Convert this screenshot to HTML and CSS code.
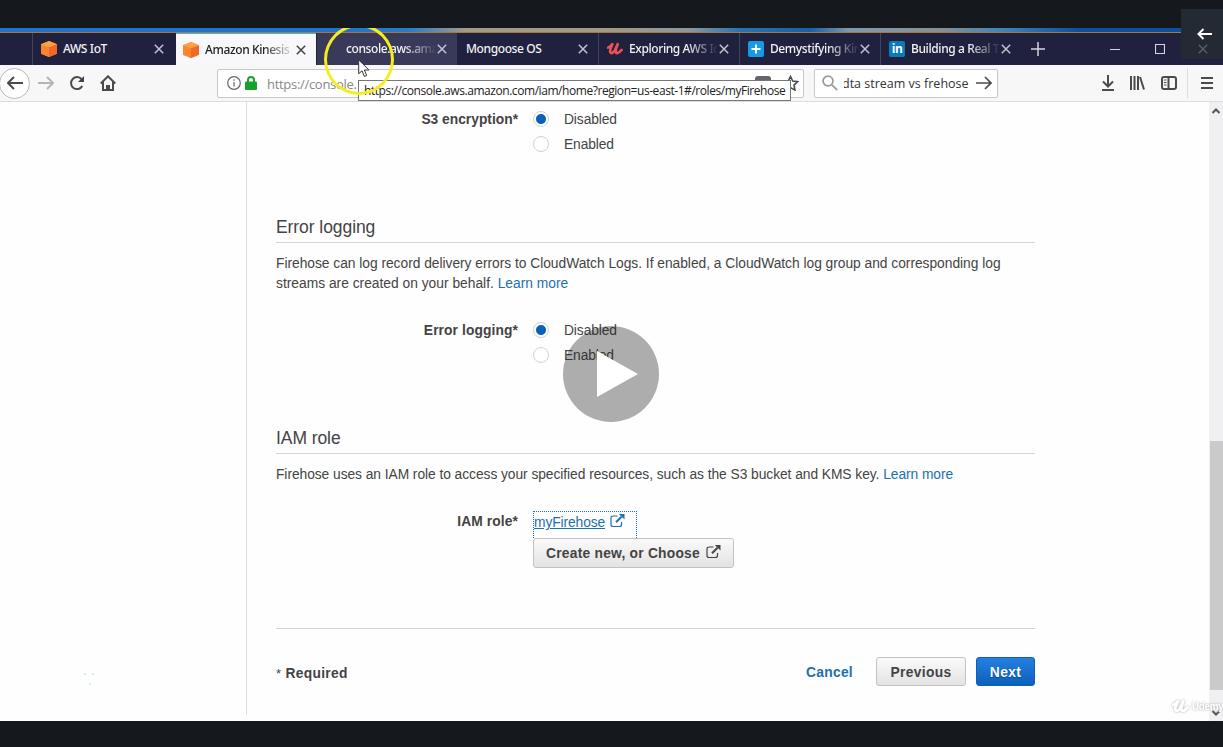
FILE: index.html
```html
<!DOCTYPE html>
<html lang="en">
<head>
<meta charset="utf-8">
<title>Amazon Kinesis Firehose</title>
<link rel="stylesheet" href="styles.css">
</head>
<body>
<svg class="defs" width="0" height="0">
  <symbol id="cube" viewBox="0 0 16 16"><path d="M8 0l8 3.2v9.6L8 16l-8-3.200V3.200z" fill="#fb8c32"/><path d="M0 3.200l8 3.100V16l-8-3.200z" fill="#fb8530"/><path d="M16 3.200L8 6.300V16l8-3.200z" fill="#ee682a"/><path d="M8 0l8 3.200-8 3.100-8-3.100z" fill="#ff9f40"/></symbol>
  <symbol id="close" viewBox="0 0 10 10"><path d="M.8.8l8.400 8.400M9.200.8L.8 9.200" fill="none" stroke="currentColor" stroke-width="1.500"/></symbol>
  <symbol id="external" viewBox="0 0 15 14"><path d="M7.500 2H3.200Q1 2 1 4v6.500Q1 12.500 3.200 12.500h6.300q2 0 2-2V8" fill="none" stroke="currentColor" stroke-width="1.200"/><path d="M6 8.300l5.500-5.500" stroke="currentColor" stroke-width="2"/><path d="M8.800 0H14.500v5.600z" fill="currentColor"/></symbol>
  <symbol id="u" viewBox="0 0 15 13"><path d="M1 5.200Q4 4 5 2 2.400 7.500 3 9.500q1.200 2.200 4.300-1.500L10 2Q7.600 7.800 8.300 9.700q1.500 2 5.400-2.300" fill="none" stroke="currentColor" stroke-width="2.500" stroke-linecap="round" stroke-linejoin="round"/></symbol>
</svg>
<div class="screen">
  <div class="desktop"></div>
  <div class="tabs">
    <div class="tab-gap"></div>
    <div class="tab"><svg class="fav"><use href="#cube"/></svg><span class="title">AWS IoT</span><svg class="x"><use href="#close"/></svg></div>
    <div class="tab active"><svg class="fav"><use href="#cube"/></svg><span class="title fade">Amazon Kinesis</span><svg class="x"><use href="#close"/></svg></div>
    <div class="tab hover"><span class="title fade">console.aws.ama</span><svg class="x"><use href="#close"/></svg></div>
    <div class="tab plain"><span class="title">Mongoose OS</span><svg class="x"><use href="#close"/></svg></div>
    <div class="tab"><svg class="fav udemy"><use href="#u"/></svg><span class="title fade">Exploring AWS Io</span><svg class="x"><use href="#close"/></svg></div>
    <div class="tab"><svg class="fav" viewBox="0 0 16 16"><rect width="16" height="16" rx="2" fill="#159ae5"/><path d="M8 3.500v9M3.500 8h9" stroke="#fff" stroke-width="2"/></svg><span class="title fade">Demystifying Kin</span><svg class="x"><use href="#close"/></svg></div>
    <div class="tab"><span class="fav linkedin">in</span><span class="title fade">Building a Real T</span><svg class="x"><use href="#close"/></svg></div>
    <div class="window-tools">
      <svg width="14" height="14" viewBox="0 0 14 14"><path d="M7 0v14M0 7h14"/></svg>
      <svg class="min" width="10" height="10" viewBox="0 0 10 10"><path d="M0 5.500h10"/></svg>
      <svg class="max" width="10" height="10" viewBox="0 0 10 10"><path d="M.5.5h9v9h-9z"/></svg>
    </div>
  </div>
  <div class="toolbar">
    <span class="back"><svg width="16" height="14" viewBox="0 0 16 14"><path d="M16 7H1M7 1L1 7l6 6"/></svg></span>
    <svg class="forward" width="16" height="14" viewBox="0 0 16 14"><path d="M0 7h15M9 1l6 6-6 6"/></svg>
    <svg class="reload" width="16" height="16" viewBox="0 0 16 16"><path d="M12.700 4.300A6 6 0 1 0 13.300 11"/><path d="M15 1v6H9z" fill="#444" stroke="none"/></svg>
    <svg class="home" width="16" height="16" viewBox="0 0 16 16"><path d="M.8 8.500L8 1.300l7.200 7.200M3 7v8h10V7"/><path d="M6 15v-5h4v5z" fill="#4b4b4d" stroke="none"/></svg>
    <div class="url">
      <svg width="14" height="14" viewBox="0 0 14 14"><circle cx="7" cy="7" r="6.300"/><path d="M7 6v4.500M7 3.300v1.500"/></svg>
      <svg width="12" height="14" viewBox="0 0 12 14"><path d="M3 6V4a3 3 0 0 1 6 0v2" stroke="#16a02c" stroke-width="2"/><rect y="5.500" width="12" height="8.500" rx="1" fill="#16a02c" stroke="none"/></svg>
      <span class="url-text">https://console.</span>
      <svg class="more" width="16" height="14" viewBox="0 0 16 14"><rect width="16" height="14" rx="3" fill="#666" stroke="none"/></svg>
      <svg class="star" width="17" height="16" viewBox="0 0 17 16"><path d="M8.500 1.500l2.200 4.600 5 .6-3.700 3.400 1 5-4.500-2.500L4 15.100l1-5-3.700-3.400 5-.6z"/></svg>
    </div>
    <div class="search">
      <svg width="16" height="16" viewBox="0 0 16 16"><circle cx="6" cy="6" r="4.900" stroke="#999"/><path d="M9.700 9.700l5.500 5.500" stroke="#999"/></svg>
      <span class="search-text"><span class="dta">dta stream vs frehose</span></span>
      <svg width="16" height="14" viewBox="0 0 16 14"><path d="M0 7h15M9 1l6 6-6 6"/></svg>
    </div>
    <div class="tools">
      <svg width="12" height="16" viewBox="0 0 12 16"><path d="M6 0v11M1 6.500l5 5 5-5M0 15h12"/></svg>
      <svg width="15" height="14" viewBox="0 0 15 14"><path d="M1 0v14M4.500 0v14M8 0v14M10 1l4 12.500"/></svg>
      <svg width="16" height="14" viewBox="0 0 16 14"><rect x="1" y="1" width="14" height="12" rx="2"/><path d="M7.500 1v12"/><path d="M3 4h2.500M3 6.500h2.500M3 9h2.500" stroke-width="1"/></svg>
      <span class="divider"></span>
      <svg width="12" height="12" viewBox="0 0 12 12"><path d="M0 1h12M0 6h12M0 11h12"/></svg>
    </div>
  </div>
  <div class="page">
    <div class="side"><svg width="14" height="14" viewBox="0 0 14 14"><path d="M1 2h2M9 2h2M6 12h2" stroke="#a5dfd8" stroke-width="1.200"/></svg></div>
    <main>
      <div class="field"><div class="label">S3 encryption*</div><div><div class="opt"><i class="radio on"></i>Disabled</div><div class="opt"><i class="radio"></i>Enabled</div></div></div>
      <h2>Error logging</h2>
      <p><span class="log-text">Firehose can log record delivery errors to CloudWatch Logs. If enabled, a CloudWatch log group and corresponding log</span><br>streams are created on your behalf. <a>Learn more</a></p>
      <div class="field second"><div class="label wide">Error logging*</div><div><div class="opt"><i class="radio on"></i>Disabled</div><div class="opt"><i class="radio"></i>Enabled</div></div></div>
      <h2>IAM role</h2>
      <p class="iam-text">Firehose uses an IAM role to access your specified resources, such as the S3 bucket and KMS key. <a>Learn more</a></p>
      <div class="field role"><div class="label wide">IAM role*</div><div class="choices"><a class="role-link"><u>myFirehose</u><svg width="15" height="14"><use href="#external"/></svg></a><div class="btn choose">Create new, or Choose<svg width="15" height="14"><use href="#external"/></svg></div></div></div>
      <footer><span class="required"><small>*</small> Required</span><a class="cancel">Cancel</a><span class="btn prev">Previous</span><span class="btn next">Next</span></footer>
    </main>
    <div class="scroll"><svg width="8" height="6" viewBox="0 0 8 6"><path d="M.5 5L4 1.500 7.500 5"/></svg><span class="thumb"></span><svg width="8" height="6" viewBox="0 0 8 6"><path d="M.5 1L4 4.500 7.500 1"/></svg></div>
  </div>
  <div class="tooltip"><span>https://console.aws.amazon.com/iam/home?region=us-east-1#/roles/myFirehose</span></div>
  <div class="ring"></div>
  <svg class="cursor" viewBox="0 0 12 19"><path d="M.7.800v14l3.300-3 2.400 5.700 2.300-1-2.400-5.500h4.600z" fill="#fff" stroke="#333"/></svg>
  <div class="collapse"><svg class="ghost" width="10" height="10"><use href="#close"/></svg><svg class="arrow" width="15" height="12" viewBox="0 0 15 12"><path d="M15 6H1.500M6.500 1l-5 5 5 5" fill="none" stroke="#fff" stroke-width="2"/></svg></div>
  <div class="play"><svg width="42" height="48" viewBox="0 0 42 48"><path d="M0 1l41 23L0 47z" fill="#fff"/></svg></div>
  <div class="mark"><svg width="17" height="15"><use href="#u"/></svg><span>Udemy</span></div>
</div>
</body>
</html>
```
FILE: styles.css
```css
* { box-sizing: border-box; }
body { margin: 0; background: #15181d; font-family: "Liberation Sans", Arial, sans-serif; }
svg { flex: none; display: block; }
.defs { position: absolute; }
.screen { position: relative; width: 1223px; height: 747px; padding-top: 28px; overflow: hidden; }
.desktop { height: 5px; border-bottom: 1px solid #a8793f; background: linear-gradient(90deg, #2373c4 0 340px, #2a7bc7 410px, #a39b84 465px 600px, #8c969a 690px, #2873b0 740px, #1760a5 810px, #8298aa 850px, #888f90 940px, #4384b8 1000px, #0c509c 1080px); }
.tabs { display: flex; height: 32px; background: #20213f; color: #f2f2f6; font: 500 12px "Noto Sans", "Open Sans", sans-serif; letter-spacing: -.4px; }
.tab-gap { width: 32px; }
.tab { display: flex; align-items: center; width: 141px; border-left: 1px solid #41425c; padding: 0 10px 0 8px; }
.tab-gap + .tab { width: 144px; padding-right: 12px; }
.tab.active { width: 140px; padding: 0 10px 0 7px; border: 0; border-top: 1px solid #3bb5e8; background: #f8f8fa; color: #222; }
.tab.hover { border-color: #20213f; background: #39395a; padding-left: 29px; }
.tab.plain { padding-left: 8px; border-color: #20213f; }
.fav { width: 16px; height: 16px; margin-right: 6px; flex: none; }
.udemy { height: 14px; color: #eb5252; }
.linkedin { background: #087bb8; color: #fff; border-radius: 2px; font: bold 12px/16px "Open Sans", sans-serif; text-align: center; }
.title { flex: 1; min-width: 0; white-space: nowrap; line-height: 20px; margin-right: 2px; }
.fade { mask-image: linear-gradient(90deg, #000 65%, transparent 102%); }
.x { width: 10px; height: 10px; color: #c3c3cf; }
.active .x { color: #444; }
.window-tools { display: flex; align-items: center; padding-left: 10px; }
.window-tools svg { fill: none; stroke: #d4d4de; stroke-width: 1.500; }
.window-tools .min { margin-left: 65px; stroke-width: 1; }
.window-tools .max { margin-left: 35px; stroke-width: 1.200; }
.toolbar { display: flex; align-items: center; height: 37px; background: #f7f7f8; border-bottom: 1px solid #ddd; font: 13px "Open Sans", "Noto Sans", sans-serif; color: #333; }
.toolbar svg { fill: none; stroke: #4b4b4d; stroke-width: 2; }
.back { width: 31px; height: 31px; margin-left: -1px; border: 1px solid #bbb; border-radius: 50%; background: #fff; display: flex; align-items: center; justify-content: center; }
.toolbar .forward { margin-left: 8px; stroke: #b5b5b8; }
.reload { margin-left: 15px; }
.home { margin-left: 15px; }
.url { display: flex; align-items: center; margin-left: 101px; width: 587px; height: 29px; padding-left: 9px; border: 1px solid #c8c8c8; border-radius: 2px; background: #fff; }
.url svg:first-child { stroke: #666; stroke-width: 1.200; margin-right: 4px; }
.url-text { color: #888; margin: 2px 0 0 10px; width: 92px; line-height: 20px; letter-spacing: -.3px; }
.url .more { margin-left: 396px; }
.url .star { margin-left: 11px; stroke-width: 1.600; }
.search { display: flex; align-items: center; margin-left: 10px; width: 184px; height: 29px; padding-left: 7px; border: 1px solid #c8c8c8; border-radius: 2px; background: #fff; font-size: 12.500px; }
.search .search-text { margin: 2px 7px 0 6px; width: 125px; overflow: hidden; white-space: nowrap; line-height: 20px; }
.search svg { stroke-width: 1.700; }
.dta { margin-left: -2px; }
.tools { display: flex; align-items: center; margin-left: 104px; gap: 16px; }
.divider { width: 1px; height: 30px; background: #ddd; margin-left: -6px; }
.tools svg:last-child { margin-left: -3px; }
.page { display: flex; height: 619px; background: #fefefe; color: #444; font-size: 13.800px; }
.side { width: 246px; padding: 570px 0 0 83px; }
main { width: 789px; height: 613px; border-left: 1px solid #ddd; padding: 5px 0 0 29px; }
.field { display: flex; }
.label { width: 242px; margin-right: 15px; text-align: right; font-weight: bold; line-height: 25px; }
.wide { letter-spacing: .1px; }
.opt { display: flex; align-items: center; height: 25px; letter-spacing: -.1px; }
.radio { width: 16px; height: 16px; margin: -1px 15px 0 0; border: 1px solid #d2d2d2; border-radius: 50%; background: #fff; }
.radio.on { background: radial-gradient(circle, #0b61ba 0 4.500px, #fff 5.500px); }
h2 { margin: 55px 0 11px; height: 31px; border-bottom: 1px solid #d5d5d5; font: 17.500px/30px "Liberation Sans", Arial, sans-serif; letter-spacing: -.07px; }
p { margin: 0; line-height: 20px; white-space: nowrap; }
.log-text { letter-spacing: -.026px; }
.iam-text { letter-spacing: -.055px; }
a { color: #1c70ad; }
.second { margin-top: 24px; }
.role { margin-top: 26px; height: 57px; }
.role .label { line-height: 22px; }
.role-link { display: flex; width: 104px; height: 27px; border: 1px dotted #1c70ad; border-bottom: 0; line-height: 22px; letter-spacing: -.1px; }
.role-link svg { margin: 2px 0 0 5px; }
.btn { display: flex; align-items: center; justify-content: center; height: 29px; border: 1px solid #c2c2c2; border-radius: 3px; background: linear-gradient(#fafafa, #e3e3e3); font-weight: bold; color: #444; letter-spacing: .35px; padding-top: 1px; }
.choose { width: 201px; height: 30px; letter-spacing: .23px; }
.choose svg { margin: -4px 0 0 6px; }
footer { display: flex; align-items: center; margin-top: 60px; border-top: 1px solid #d2d2d2; padding-top: 28px; font-weight: bold; letter-spacing: .3px; }
.required { flex: 1; padding-top: 3px; }
.required small { font-size: 13px; font-weight: normal; }
.cancel { margin-right: 23px; padding-top: 1px; }
.prev { width: 90px; margin-right: 10px; }
.next { width: 59px; color: #fff; background: linear-gradient(#257fe0, #0d60bc); border-color: #0d60b2; text-shadow: 0 1px 1px #06478d; }
.scroll { display: flex; flex-direction: column; align-items: center; width: 14px; margin-left: 174px; padding-top: 6px; background: #f0eff2; }
.scroll svg { fill: none; stroke: #555; stroke-width: 2; }
.thumb { width: 13px; height: 249px; margin: 327px 0 20px 1px; background: #cacacb; }
.tooltip { position: absolute; left: 358px; top: 80px; width: 433px; height: 21px; border: 1px solid #777; background: #fff; color: #222; padding-left: 5px; font: 12px/19px "Open Sans", "Noto Sans", sans-serif; letter-spacing: -.44px; white-space: nowrap; }
.ring { position: absolute; left: 324px; top: 24px; width: 70px; height: 71px; border: 3px solid #f5ed22; border-radius: 50%; clip-path: inset(4px 0 0); }
.cursor { position: absolute; left: 358px; top: 59px; width: 12px; height: 19px; }
.collapse { position: absolute; left: 1181px; top: 9px; width: 42px; height: 50px; background: #242a33; }
.ghost { position: absolute; left: 17px; top: 35px; color: #555d68; }
.arrow { position: absolute; left: 16px; top: 19px; }
.play { position: absolute; left: 563px; top: 326px; width: 96px; height: 96px; border-radius: 50%; background: rgba(30,30,30,.36); padding: 24px 0 0 34px; }
.mark { position: absolute; left: 1172px; top: 699px; display: flex; align-items: center; color: #fff; font: bold 10px "Liberation Sans", sans-serif; letter-spacing: -.4px; gap: 3px; filter: drop-shadow(0 0 1px #aaa); }
```
